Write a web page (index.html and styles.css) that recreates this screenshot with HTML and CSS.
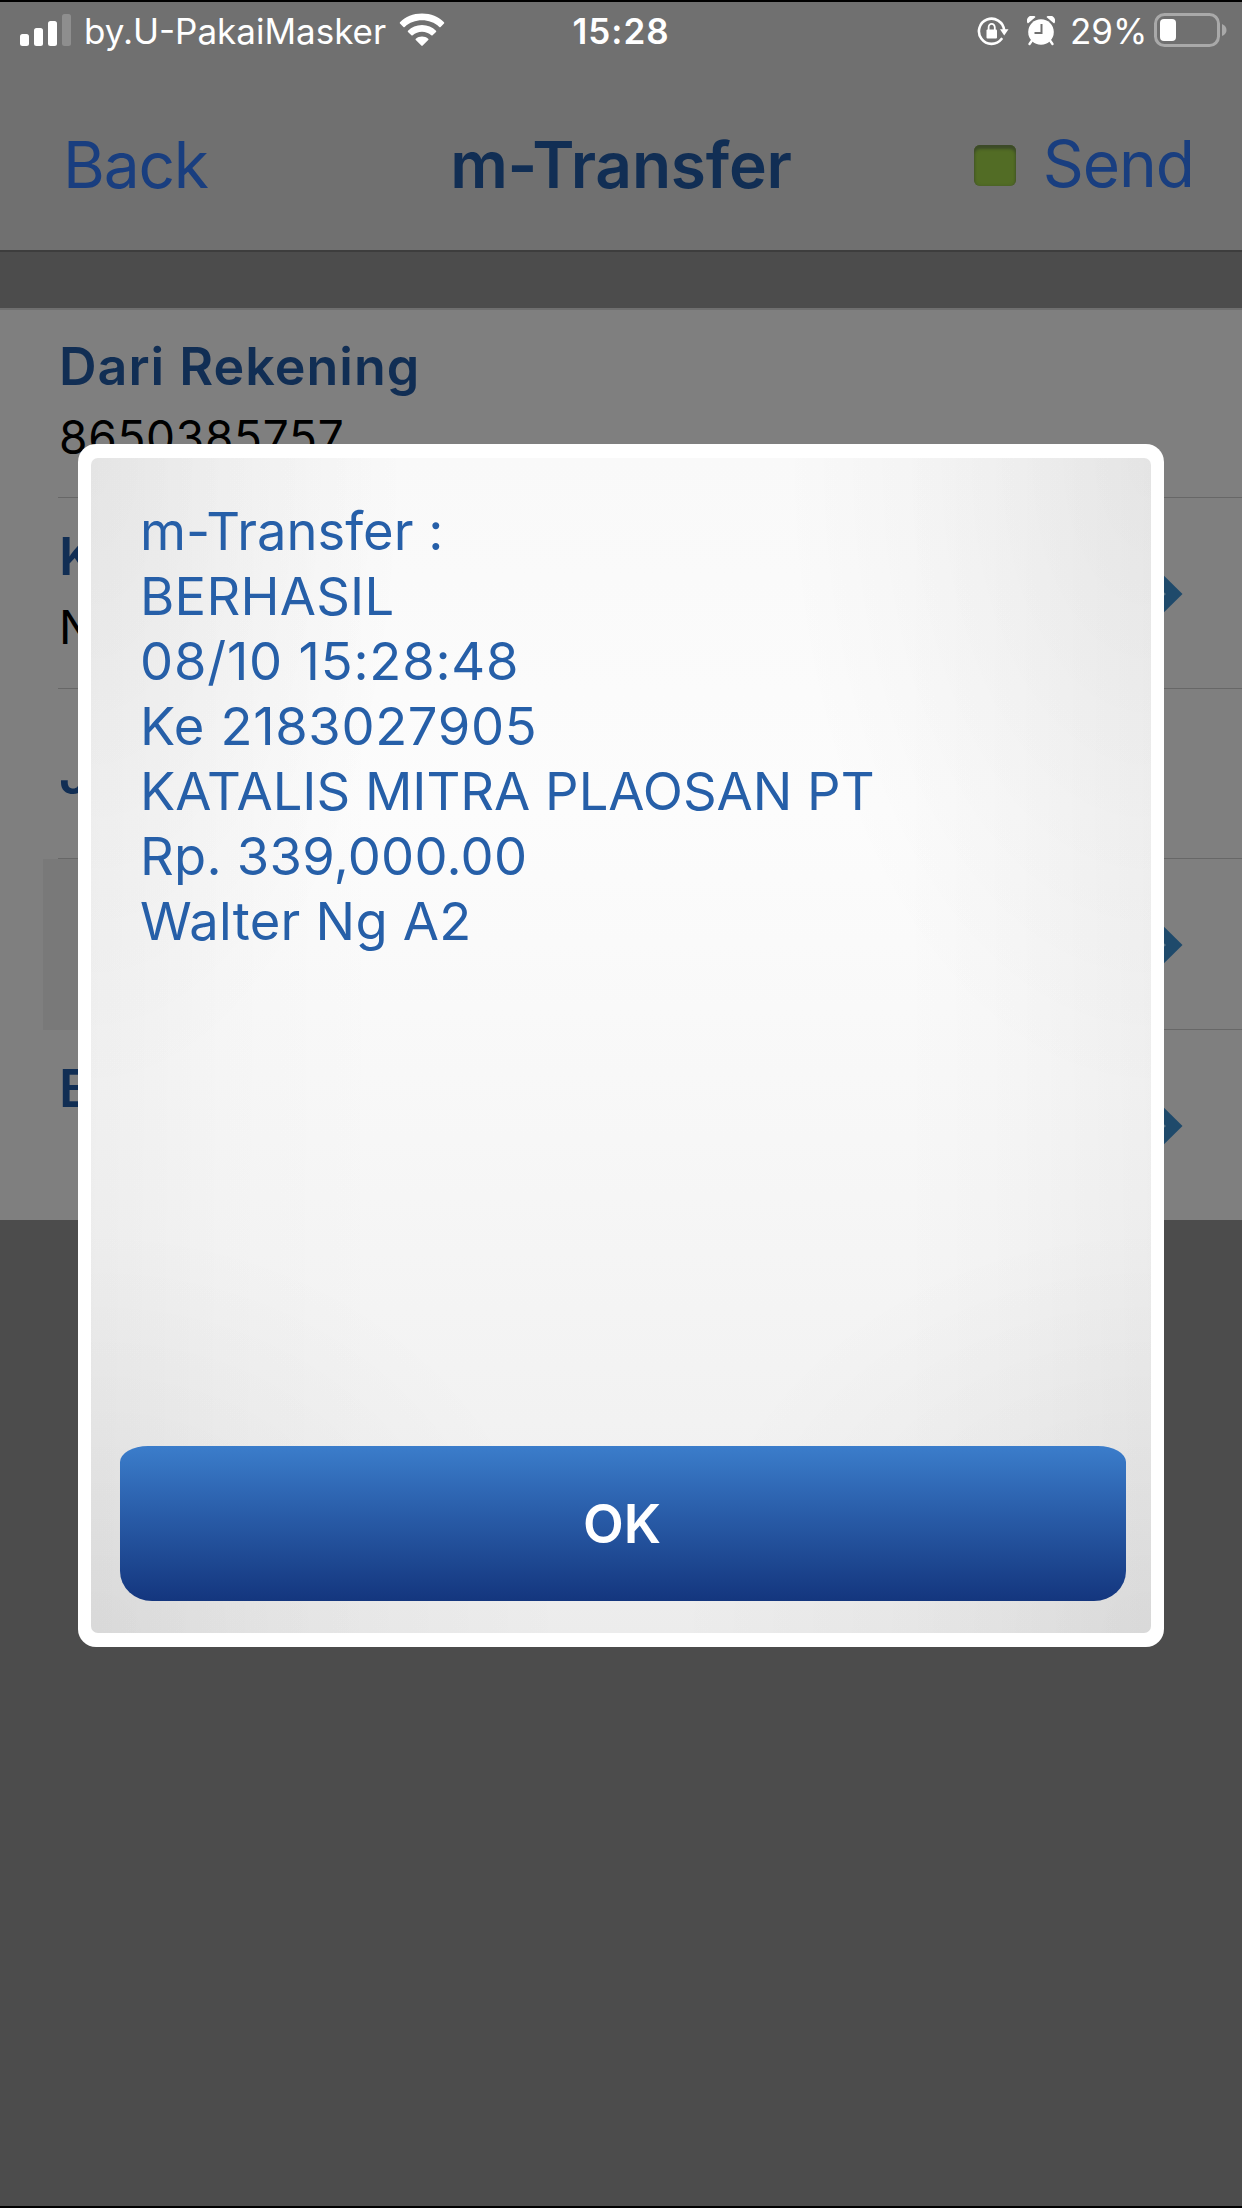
FILE: index.html
```
<!DOCTYPE html>
<html lang="id">
<head>
    <meta charset="UTF-8">
    <title>m-Transfer</title>
    <link rel="stylesheet" href="styles.css">
</head>
<body>
    <div class="screen">
        <div class="status-bar">
            <div class="status-left">
                <svg class="signal" width="52" height="33" viewBox="0 0 52 33">
                    <rect x="0" y="20" width="9" height="12" rx="2.5" fill="#fff"/>
                    <rect x="14" y="14" width="9" height="18" rx="2.5" fill="#fff"/>
                    <rect x="28" y="7" width="9" height="25" rx="2.5" fill="#fff"/>
                    <rect x="42" y="0" width="9" height="32" rx="2.5" fill="#8e8e8e"/>
                </svg>
                <span class="carrier">by.U-PakaiMasker</span>
                <svg class="wifi" width="46" height="34" viewBox="0 0 46 34" fill="#fff">
                    <path d="M23 0.5C32 0.5 39.5 3.8 45 9.3Q45.6 10 45 10.6L41.6 14Q41 14.6 40.3 14C35.5 9.5 29.5 7.3 23 7.3S10.5 9.5 5.7 14Q5 14.6 4.4 14L1 10.6Q0.4 10 1 9.3C6.5 3.8 14 0.5 23 0.5Z"/>
                    <path d="M23 12C28.6 12 33.4 14.2 37 17.8Q37.6 18.4 37 19L33.6 22.3Q33 22.9 32.3 22.3C29.7 20 26.5 18.8 23 18.8S16.3 20 13.7 22.3Q13 22.9 12.4 22.3L9 19Q8.4 18.4 9 17.8C12.6 14.2 17.4 12 23 12Z"/>
                    <path d="M23 23.5C25.4 23.5 27.5 24.3 29.2 25.7Q29.9 26.4 29.2 27.1L23.7 32.6Q23 33.2 22.3 32.6L16.8 27.1Q16.1 26.4 16.8 25.7C18.5 24.3 20.6 23.5 23 23.5Z"/>
                </svg>
            </div>
            <span class="clock">15:28</span>
            <div class="status-right">
                <svg class="lock" width="32" height="30" viewBox="0 0 32 30">
                    <path d="M24.5 22A12.6 12.6 0 1 1 27.1 13" fill="none" stroke="#fff" stroke-width="2.6" stroke-linecap="round"/>
                    <path d="M23 12.2H31.5L27.2 18.5Z" fill="#fff"/>
                    <rect x="9.5" y="12.5" width="10.5" height="9" rx="1" fill="#fff"/>
                    <path d="M11.6 13.5V10.5a3.1 3.6 0 0 1 6.2 0V13.5" fill="none" stroke="#fff" stroke-width="1.8"/>
                </svg>
                <svg class="alarm" width="28" height="30" viewBox="0 0 28 30">
                    <path d="M1 6.5A4.5 4.5 0 0 1 7.5 1ZM27 6.5A4.5 4.5 0 0 0 20.5 1Z" fill="#fff" stroke="#fff" stroke-width="1.5" stroke-linejoin="round"/>
                    <circle cx="14" cy="16" r="12.8" fill="#fff"/>
                    <path d="M5 24.5L2.5 28M23 24.5L25.5 28" stroke="#fff" stroke-width="2.4" stroke-linecap="round"/>
                    <path d="M14.5 8V17H7.5" fill="none" stroke="#707070" stroke-width="2"/>
                </svg>
                <span class="percent">29%</span>
                <svg class="battery" width="74" height="34" viewBox="0 0 74 34">
                    <rect x="1.5" y="1.5" width="63" height="31" rx="9" fill="none" stroke="#a9a9a9" stroke-width="3"/>
                    <rect x="6" y="6" width="16" height="22" rx="4" fill="#fff"/>
                    <path d="M68 11Q72.5 13 72.5 17T68 23Z" fill="#a9a9a9"/>
                </svg>
            </div>
        </div>

        <div class="navbar">
            <span class="nav-back">Back</span>
            <span class="nav-title">m-Transfer</span>
            <div class="nav-send">
                <i class="indicator"></i>
                <span class="send-text">Send</span>
            </div>
        </div>

        <div class="list">
            <div class="row row-account">
                <div class="row-label">Dari Rekening</div>
                <div class="row-value">8650385757</div>
            </div>
            <div class="row row-target">
                <div>
                    <div class="row-label">K</div>
                    <div class="row-value">N</div>
                </div>
                <svg class="arrow" width="38" height="74" viewBox="0 0 38 74"><path d="M0 0L37.5 37L0 74Z" fill="#1f4a6b"/><path d="M15 33L19.5 37L15 41" fill="none" stroke="#5f7785" stroke-width="2"/></svg>
            </div>
            <div class="row row-amount">
                <div class="row-label">J</div>
            </div>
            <div class="row row-field">
                <svg class="arrow" width="38" height="74" viewBox="0 0 38 74"><path d="M0 0L37.5 37L0 74Z" fill="#1f4a6b"/><path d="M15 33L19.5 37L15 41" fill="none" stroke="#5f7785" stroke-width="2"/></svg>
            </div>
            <div class="row row-note">
                <div class="row-label">B</div>
                <svg class="arrow" width="38" height="74" viewBox="0 0 38 74"><path d="M0 0L37.5 37L0 74Z" fill="#1f4a6b"/><path d="M15 33L19.5 37L15 41" fill="none" stroke="#5f7785" stroke-width="2"/></svg>
            </div>
        </div>

        <div class="modal">
            <div class="modal-body">
                <div class="message">
                    <p>m-Transfer :</p>
                    <p class="status-text">BERHASIL</p>
                    <p class="digits">08/10 15:28:48</p>
                    <p class="account">Ke 2183027905</p>
                    <p>KATALIS MITRA PLAOSAN PT</p>
                    <p class="status-text">Rp. 339,000.00</p>
                    <p class="status-text">Walter Ng A2</p>
                </div>
                <button class="btn-ok">OK</button>
            </div>
        </div>
    </div>
</body>
</html>
```
FILE: styles.css
```
* { margin: 0; padding: 0; box-sizing: border-box; }
body { font-family: Inter, "Liberation Sans", sans-serif; background: #4c4c4c; }
.screen { position: relative; width: 1242px; height: 2208px; overflow: hidden; background: #4c4c4c; border-top: 2px solid #000; border-bottom: 2px solid #000; }
svg { display: block; flex: none; }
span { white-space: nowrap; }

.status-bar { display: grid; grid-template-columns: 1fr auto 1fr; height: 58px; padding: 0 14px; background: #707070; color: #fff; font-size: 35px; line-height: 58px; }
.status-left { display: flex; align-items: flex-start; padding-left: 6px; }
.signal { margin-top: 12px; }
.carrier { width: 313px; padding-left: 12px; }
.wifi { margin: 11px 0 0 14px; }
.clock { font-weight: 600; letter-spacing: 1px; }
.status-right { display: flex; justify-content: flex-end; align-items: flex-start; }
.lock { margin: 15px 18px 0 0; }
.alarm { margin: 14px 15px 0 0; }
.percent { width: 84px; }
.battery { margin-top: 11px; }

.navbar { display: grid; grid-template-columns: 1fr auto 1fr; height: 192px; padding: 66px 48px 0; background: #707070; border-bottom: 2px solid #3d3d3d; font-size: 64px; line-height: 78px; color: #193e7f; }
.nav-back { padding-left: 15px; letter-spacing: -1.2px; }
.nav-title { font-weight: 600; letter-spacing: -0.2px; color: #112e54; }
.nav-send { display: flex; justify-content: flex-end; letter-spacing: -1px; }
.send-text { line-height: 76px; }
.indicator { width: 42px; height: 41px; margin: 19px 27px 0 0; border-radius: 6px; background: #526c25; box-shadow: inset 0 4px 3px #3c4a28, inset 0 0 3px #46582a; }

.list { margin-top: 56px; background: #7f7f7f; border-top: 2px solid #6f6f6f; }
.row { display: flex; justify-content: space-between; padding-left: 59px; padding-right: 59px; background: linear-gradient(#676767, #676767) no-repeat 58px 100% / 100% 1px; }
.row-label { font-size: 52px; line-height: 64px; font-weight: 600; letter-spacing: 1px; color: #112e54; }
.row-value { margin-top: 10px; font-size: 46px; line-height: 56px; letter-spacing: 0.7px; color: #000; }
.row-account { height: 188px; flex-direction: column; justify-content: flex-start; padding-top: 25px; }
.row-target { height: 191px; padding-top: 27px; }
.row-target .arrow { margin-top: 32px; }
.row-amount { height: 170px; padding-top: 55px; }
.row-field { height: 171px; margin-left: 43px; justify-content: flex-end; align-items: center; background: linear-gradient(#676767, #676767) no-repeat 900px 100% / 100% 1px, linear-gradient(#797979, #797979) no-repeat 0 0 / 900px 100%; }
.row-note { height: 190px; padding-top: 27px; background-image: none; }
.row-note .arrow { margin-top: 32px; }

.modal { position: absolute; left: 78px; top: 442px; width: 1086px; height: 1203px; padding: 14px 13px; border-radius: 18px; background: #fff; }
.modal-body { display: flex; flex-direction: column; justify-content: space-between; height: 1175px; padding: 41px 25px 32px 29px; border-radius: 7px; background: radial-gradient(ellipse 30% 55% at 0 0, rgba(0,0,0,0.05), rgba(0,0,0,0)), radial-gradient(ellipse 35% 55% at 100% 0, rgba(0,0,0,0.05), rgba(0,0,0,0)), radial-gradient(ellipse 45% 35% at 0 100%, rgba(0,0,0,0.05), rgba(0,0,0,0)), radial-gradient(ellipse 45% 35% at 100% 100%, rgba(0,0,0,0.05), rgba(0,0,0,0)), linear-gradient(90deg, rgba(0,0,0,0.035), rgba(0,0,0,0.01) 13%, rgba(0,0,0,0) 28%, rgba(0,0,0,0) 76%, rgba(0,0,0,0.01) 87%, rgba(0,0,0,0.035)), linear-gradient(#f9f9f9, #fcfcfc 30%, #f7f7f7 58%, #f2f2f2 82%, #ececec); }
.message { padding-left: 20px; font-size: 52.5px; line-height: 65px; color: #265fa8; white-space: nowrap; }
.message .status-text { letter-spacing: 0.25px; }
.message .digits { letter-spacing: 0.8px; }
.message .account { letter-spacing: 0.65px; }
.btn-ok { height: 155px; padding-right: 2px; border: none; border-radius: 28px 28px 32px 32px / 16px 16px 30px 30px; background: linear-gradient(#3b7dcb, #2a5eaa 42%, #14367e); color: #fff; font-family: inherit; font-size: 53px; font-weight: 600; cursor: pointer; }
```
